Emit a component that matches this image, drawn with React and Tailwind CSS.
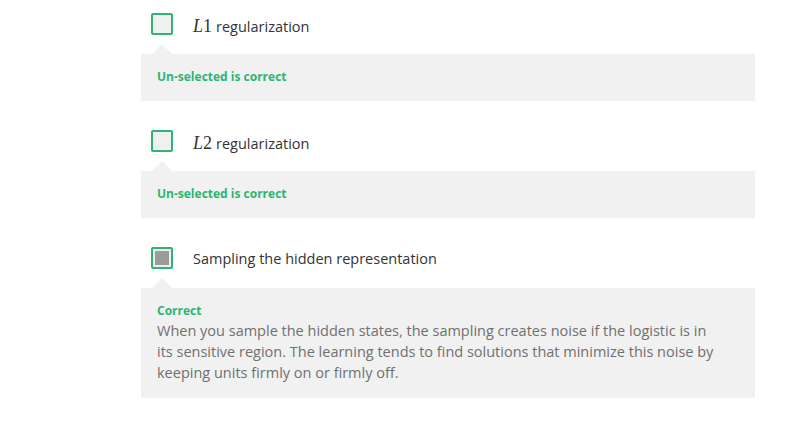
import React from "react";

const items = [
  {
    math: "L",
    num: "1",
    label: "regularization",
    checked: false,
    title: "Un-selected is correct",
  },
  {
    math: "L",
    num: "2",
    label: "regularization",
    checked: false,
    title: "Un-selected is correct",
  },
  {
    label: "Sampling the hidden representation",
    checked: true,
    title: "Correct",
    body: "When you sample the hidden states, the sampling creates noise if the logistic is in its sensitive region. The learning tends to find solutions that minimize this noise by keeping units firmly on or firmly off.",
  },
];

function Checkbox({ checked }) {
  return (
    <div className="w-[22px] h-[22px] border-2 border-[#2bb673] rounded-[2px] bg-[#f0f0f0] flex items-center justify-center shrink-0">
      {checked && <div className="w-[14px] h-[14px] bg-[#9b9b9b]" />}
    </div>
  );
}

export default function App() {
  return (
    <div
      className="w-[797px] h-[436px] bg-white pt-[13px]"
      style={{ fontFamily: '"Open Sans", sans-serif' }}
    >
      <div className="ml-[141px] w-[614px] flex flex-col gap-[29px]">
        {items.map((item, i) => (
          <div key={i}>
            <div className="flex items-center h-[22px] pl-[10px]">
              <Checkbox checked={item.checked} />
              <div className="ml-[20px] mt-[3px] text-[14.5px] text-[#333] leading-none">
                {item.math && (
                  <span
                    className="text-[18px] mr-[4px]"
                    style={{ fontFamily: '"Liberation Serif", serif' }}
                  >
                    <i>{item.math}</i>
                    {item.num}
                  </span>
                )}
                {item.label}
              </div>
            </div>
            <div className="relative mt-[19px] bg-[#f1f1f1] px-[16px] pt-[15px] pb-[16px]">
              <div className="absolute left-[11px] top-[-10px] w-0 h-0 border-l-[10px] border-r-[10px] border-b-[10px] border-l-transparent border-r-transparent border-b-[#f1f1f1]" />
              <div className="text-[12px] font-bold text-[#2bb673] leading-[16px]">
                {item.title}
              </div>
              {item.body && (
                <p className="mt-[1px] -mb-[1px] text-[14.5px] text-[#707070] leading-[21px] pr-[18px]">
                  {item.body}
                </p>
              )}
            </div>
          </div>
        ))}
      </div>
    </div>
  );
}
